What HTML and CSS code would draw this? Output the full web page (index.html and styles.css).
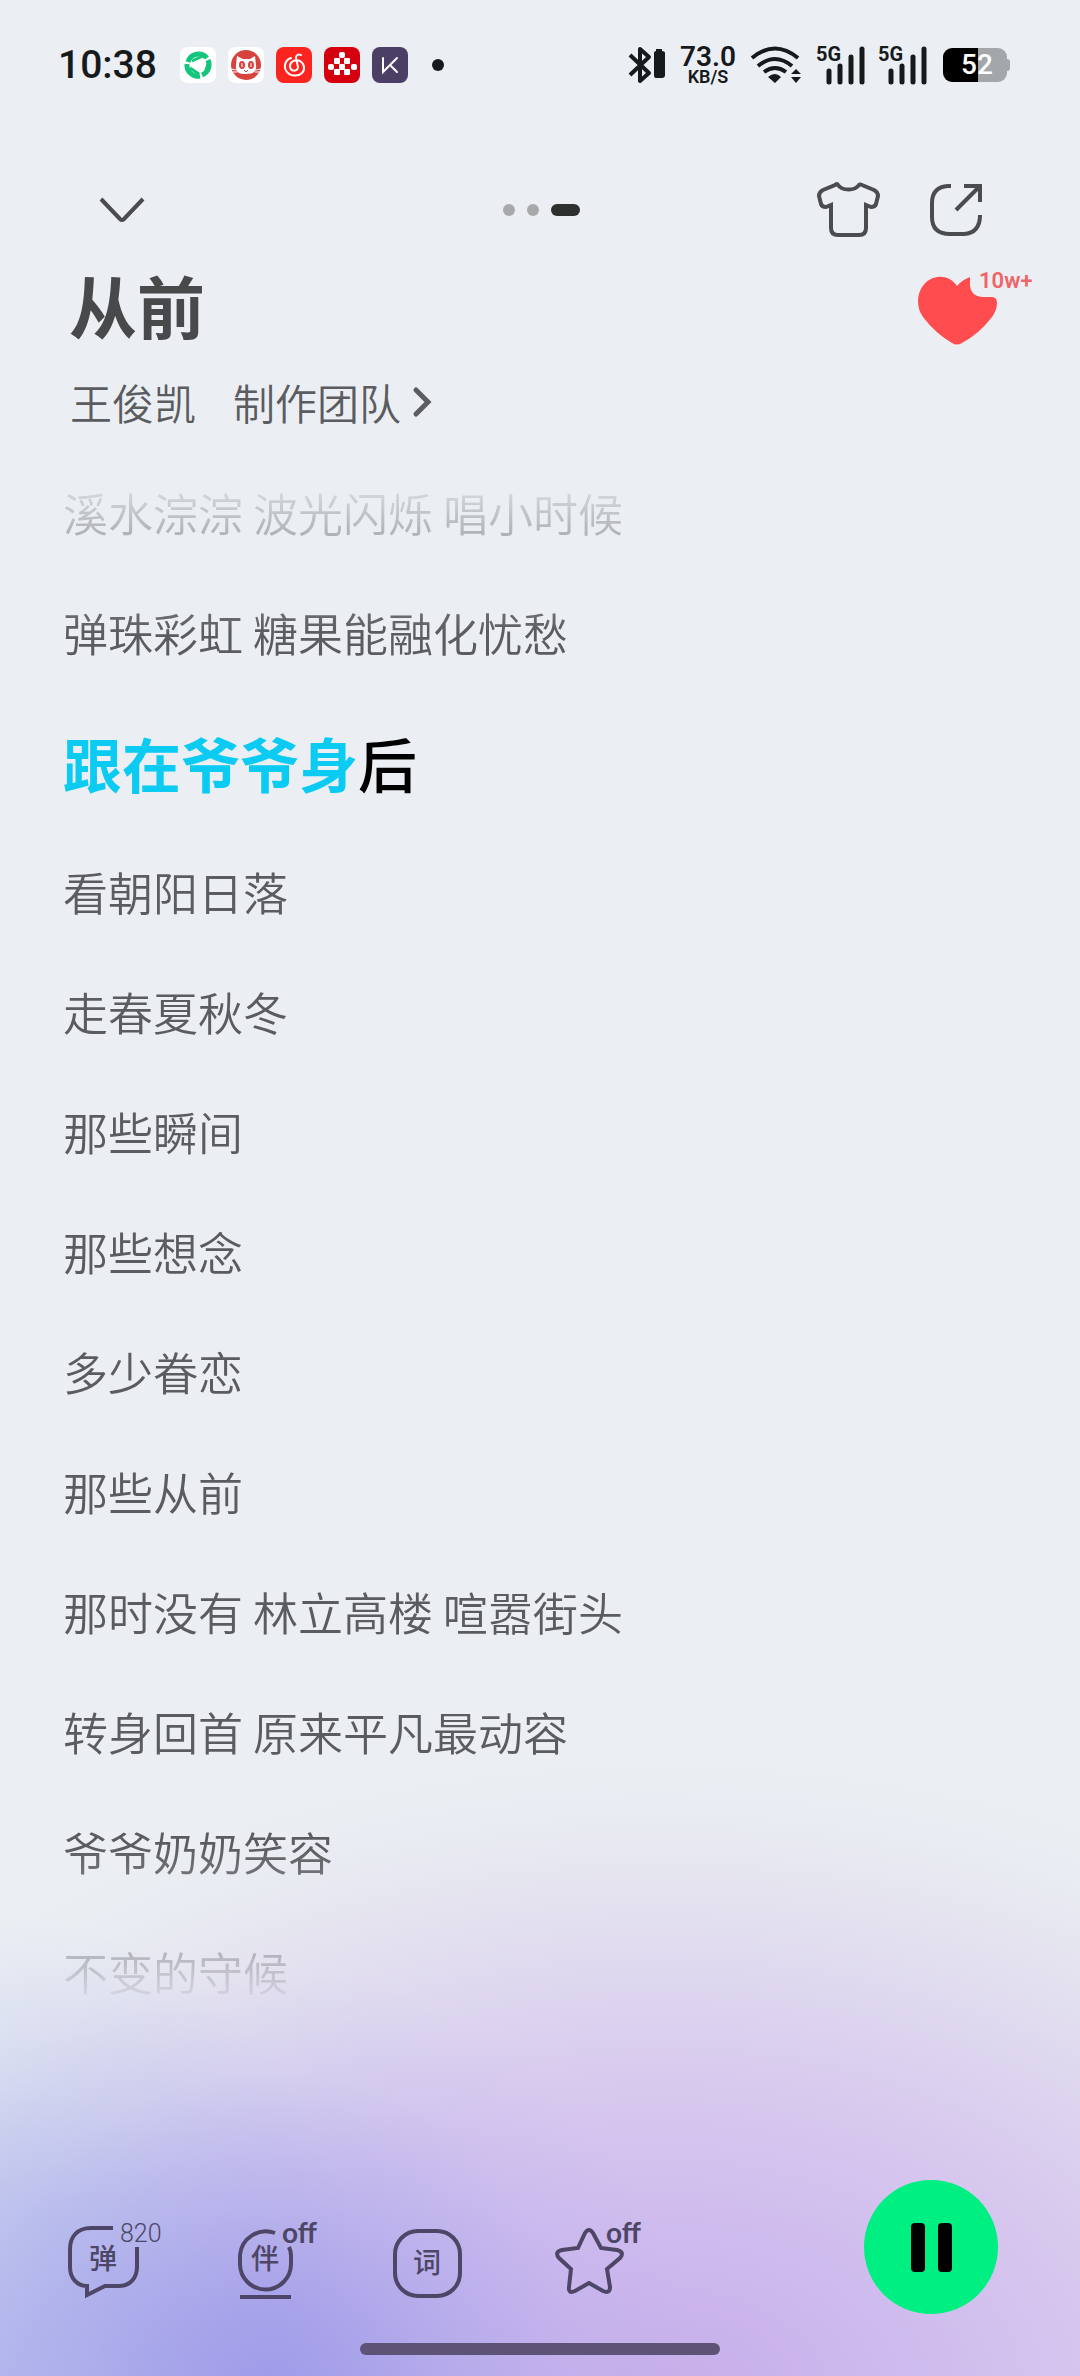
FILE: index.html
```html
<!DOCTYPE html>
<html lang="zh-CN">
<head>
<meta charset="UTF-8">
<meta name="viewport" content="width=device-width, initial-scale=1.0">
<title>从前 - 王俊凯</title>
<link rel="stylesheet" href="styles.css">
</head>

<body>
    <div class="status">
        <span class="time">10:38</span>
        <div class="apps">
            <svg class="app" viewBox="0 0 36 36">
                <rect width="36" height="36" rx="8" fill="#fff"/>
                <g fill="none" stroke="#14c57c" stroke-width="5">
                    <path d="M8 15A11 11 0 0 1 27 11"/>
                    <path d="M28 13A11 11 0 0 1 22 28"/>
                    <path d="M20 29A11 11 0 0 1 7 17"/>
                </g>
                <path d="M12 14L23 9M28 17L25 26M10 21L19 27" stroke="#14c57c" stroke-width="3"/>
            </svg>
            <svg class="app" viewBox="0 0 36 36">
                <rect width="36" height="36" rx="8" fill="#fff"/>
                <circle cx="18" cy="18" r="15" fill="#d8423c"/>
                <path d="M9 9L15 12H22L27 9L28 18C29 26 24 27 18 27S7 26 8 18Z" fill="#fff"/>
                <ellipse cx="14" cy="18" rx="3" ry="4" fill="#d8423c"/>
                <ellipse cx="23" cy="18" rx="3" ry="4" fill="#d8423c"/>
                <path d="M14 16V20M23 16V20" stroke="#fff"/>
                <path d="M16 23L18 25L20 23" fill="none" stroke="#d8423c"/>
                <path d="M3 22L8 23M4 25L9 25M33 22L28 23M32 25L27 25" stroke="#fff"/>
            </svg>
            <svg class="app" viewBox="0 0 36 36">
                <rect width="36" height="36" rx="8" fill="#fb241f"/>
                <path d="M25 8C22 7 20 8 20 11L22 20C22 25 14 25 14 19C14 14 20 12 24 14C29 17 29 23 26 26C22 30 14 29 11 25C7 20 9 13 15 11" fill="none" stroke="#fff" stroke-width="2" stroke-linecap="round"/>
            </svg>
            <svg class="app" viewBox="0 0 36 36">
                <rect width="36" height="36" rx="8" fill="#d5000f"/>
                <g fill="#fff">
                    <rect x="15" y="5" width="6" height="6" rx="2"/>
                    <rect x="10" y="11" width="6" height="6" rx="1"/><rect x="20" y="11" width="6" height="6" rx="1"/>
                    <rect x="4" y="17" width="6" height="6" rx="2"/><rect x="15" y="17" width="6" height="6" rx="1"/><rect x="27" y="17" width="6" height="6" rx="2"/>
                    <rect x="10" y="22" width="6" height="6" rx="1"/><rect x="20" y="22" width="6" height="6" rx="1"/>
                </g>
            </svg>
            <svg class="app" viewBox="0 0 36 36">
                <rect width="36" height="36" rx="8" fill="#4c3f66"/>
                <path d="M11 11V25L25 11M18 18L25 25" fill="none" stroke="#fff" stroke-width="2" stroke-linecap="round"/>
            </svg>
        </div>
        <span class="more"></span>

        <div class="system">
            <svg class="bluetooth" viewBox="0 0 38 38">
                <path d="M2 9L21 27L12 35V3L21 11L2 29" fill="none" stroke="#171a1b" stroke-width="4" stroke-linejoin="round"/>
                <path d="M26 7Q26 5 28 5V3H34V5Q37 5 37 7V29Q37 32 34 32H28Q26 32 26 29Z" fill="#171a1b"/>
            </svg>
            <div class="speed"><b>73.0</b><small>KB/S</small></div>
            <svg class="wifi" viewBox="0 0 52 38">
                <g fill="none" stroke="#171a1b" stroke-width="4">
                    <path d="M2 12Q25 -7 48 12"/>
                    <path d="M8 20Q25 6 42 20"/>
                    <path d="M14 26Q25 18 36 26"/>
                </g>
                <path d="M18 31Q25 25 31 31L25 37Z M41 28L46 23L51 28Z M41 31H51L46 37Z" fill="#171a1b"/>
            </svg>
            <div class="signal">
                <span>5G</span>
                <svg viewBox="0 0 48 38"><path d="M13 25V36M24 20V36M35 11V36M46 3V36" stroke="#171a1b" stroke-width="5" stroke-linecap="round"/></svg>
            </div>
            <div class="signal">
                <span>5G</span>
                <svg viewBox="0 0 48 38"><path d="M13 25V36M24 20V36M35 11V36M46 3V36" stroke="#171a1b" stroke-width="5" stroke-linecap="round"/></svg>
            </div>
            <div class="battery"><span class="level">5</span><span>2</span></div>
        </div>
    </div>

    <div class="topbar">
        <button class="icon-btn" aria-label="收起">
            <svg class="chevron" viewBox="0 0 46 26"><path d="M2 2L21 22Q23 24 25 22L44 2"/></svg>
        </button>
        <div class="pages"><i></i><i></i><i class="on"></i></div>
        <div class="actions">
            <button class="icon-btn" aria-label="皮肤">
                <svg class="shirt" viewBox="0 0 62 56"><path d="M21 3C25 9 38 9 42 3Q43 2 45 3L57 8Q61 10 61 14L59 22Q58 25 54 25L49 23V46Q49 53 42 53H21Q14 53 14 46V23L9 25Q5 25 4 22L2 14Q2 10 6 8L18 3Q20 1 21 3Z"/></svg>
            </button>
            <button class="icon-btn" aria-label="分享">
                <svg class="share" viewBox="0 0 54 54"><path d="M21 3H18Q2 4 2 20V34Q2 51 20 51H34Q50 50 50 32M34 3H50V19M26 27L50 3"/></svg>
            </button>
        </div>
    </div>

    <div class="song">
        <h1>从前</h1>
        <button class="like" aria-label="喜欢">
            <svg viewBox="0 0 80 70"><path d="M40 10Q45 4 53 1V10Q54 20 65 21H75Q80 21 80 27Q80 34 75 41Q62 58 45 67Q40 70 35 67Q18 57 6 41Q1 34 1 25C2 0 29 -7 40 10Z" fill="#ff4d4f"/></svg>
            <span class="like-count">10w+</span>
        </button>
    </div>
    <div class="credits">
        <a href="#">王俊凯</a>
        <a href="#">制作团队
            <svg viewBox="0 0 18 30"><path d="M3 3L15 15L3 27"/></svg>
        </a>
    </div>

    <ul class="lyrics">
        <li>溪水淙淙 波光闪烁 唱小时候</li>
        <li>弹珠彩虹 糖果能融化忧愁</li>
        <li class="current"><span class="sung">跟在爷爷身</span>后</li>
        <li>看朝阳日落</li>
        <li>走春夏秋冬</li>
        <li>那些瞬间</li>
        <li>那些想念</li>
        <li>多少眷恋</li>
        <li>那些从前</li>
        <li>那时没有 林立高楼 喧嚣街头</li>
        <li>转身回首 原来平凡最动容</li>
        <li>爷爷奶奶笑容</li>
        <li>不变的守候</li>
    </ul>

    <div class="player">
        <div class="tools">
            <button class="tool">
                <svg viewBox="0 0 72 72"><path d="M46 2H24C10 2 3 11 3 23V41C3 52 10 60 20 60V69L38 60H52C63 60 70 52 70 41V21"/></svg>
                <span class="glyph raised">弹</span>
                <span class="badge count">820</span>
            </button>
            <button class="tool">
                <svg viewBox="0 0 72 72"><path d="M46 7A26 26 0 0 0 11 29V38A25 25 0 0 0 62 38V30Q62 25 60 21M11 71H62"/></svg>
                <span class="glyph raised">伴</span>
                <span class="badge">off</span>
            </button>
            <button class="tool">
                <svg viewBox="0 0 72 72"><rect x="4" y="5" width="65" height="65" rx="23"/></svg>
                <span class="glyph">词</span>
            </button>
            <button class="tool" aria-label="收藏">
                <svg viewBox="0 0 72 72"><path d="M32 7Q36 1 40 7L48 22L64 24Q72 26 67 32L54 43L57 61Q57 68 50 65L36 57L22 65Q15 68 16 61L18 43L6 32Q1 26 9 24L25 22Z"/></svg>
                <span class="badge">off</span>
            </button>
        </div>
        <button class="pause" aria-label="暂停"><i></i><i></i></button>
    </div>
    <div class="home"></div>
</body>
</html>
```
FILE: styles.css
```css
* {
    box-sizing: border-box;
}
body {
    margin: 0;
    min-height: 100vh;
    display: flex;
    flex-direction: column;
    font-family: "Noto Sans CJK SC", sans-serif;
    color: #5b5c5f;
    background-color: #ebeff3;
    background-image:
        radial-gradient(ellipse 420px 430px at 25% 101%, rgba(156, 152, 232, 0.95), rgba(158, 155, 233, 0.8) 20%, rgba(160, 158, 234, 0.45) 48%, rgba(165, 165, 236, 0.13) 76%, rgba(170, 175, 240, 0) 100%),
        radial-gradient(ellipse 380px 460px at 0 100%, rgba(160, 175, 236, 0.65), rgba(160, 175, 236, 0.5) 36%, rgba(165, 180, 238, 0.25) 64%, rgba(170, 185, 240, 0) 100%),
        radial-gradient(ellipse 970px 640px at 61% 101%, #c6adea, #d0bdee 30%, #d7c8ee 48%, #dcd3ef 61%, #e3e1ef 77%, #e9ecf2 92%, #ebeff3 100%);
    background-repeat: no-repeat;
}
button {
    padding: 0;
    border: none;
    background: none;
    color: inherit;
    font-family: inherit;
    cursor: pointer;
}
svg {
    display: block;
    overflow: visible;
}
a {
    color: inherit;
    text-decoration: none;
}

/* status bar */
.status {
    display: flex;
    align-items: center;
    height: 130px;
    padding: 0 73px 0 58px;
    font-family: Roboto, sans-serif;
    color: #171a1b;
}
.time {
    width: 122px;
    font-size: 39px;
    font-weight: 500;
}
.apps {
    display: flex;
    gap: 12px;
}
.app {
    width: 36px;
    height: 36px;
}
.more {
    width: 12px;
    height: 12px;
    margin-left: 24px;
    border-radius: 50%;
    background-color: #171a1b;
}
.system {
    display: flex;
    align-items: center;
    gap: 14px;
    margin-left: auto;
}
.bluetooth {
    width: 38px;
    height: 38px;
}
.speed {
    display: flex;
    flex-direction: column;
    align-items: center;
    width: 56px;
}
.speed b {
    font-size: 28px;
    line-height: 24px;
    font-weight: 600;
}
.speed small {
    font-size: 18px;
    line-height: 16px;
    font-weight: 600;
}
.wifi {
    width: 52px;
    height: 38px;
}
.signal {
    position: relative;
}
.signal svg {
    width: 48px;
    height: 38px;
}
.signal span {
    position: absolute;
    left: 0;
    top: 0;
    font-size: 20px;
    line-height: 16px;
    font-weight: 700;
}
.battery {
    position: relative;
    display: flex;
    width: 64px;
    height: 34px;
    margin-left: 3px;
    border-radius: 9px;
    background: linear-gradient(to right, #000 55%, #a3a7a9 55%);
    color: #fff;
    font-size: 28px;
    line-height: 34px;
    font-weight: 500;
}
.battery::after {
    content: "";
    position: absolute;
    right: -3px;
    top: 11px;
    width: 3px;
    height: 12px;
    border-radius: 0 3px 3px 0;
    background-color: #a3a7a9;
}
.level {
    width: 34px;
    text-align: right;
}

/* top bar */
.topbar {
    display: grid;
    grid-template-columns: 1fr auto 1fr;
    align-items: center;
    height: 120px;
    margin-top: 20px;
    padding: 0 96px 0 99px;
}
.icon-btn {
    justify-self: start;
}
.icon-btn svg {
    fill: none;
    stroke: #4a4c4e;
    stroke-width: 4px;
}
.chevron {
    width: 46px;
    height: 26px;
}
.pages {
    display: flex;
    gap: 12px;
}
.pages i {
    width: 12px;
    height: 12px;
    border-radius: 6px;
    background-color: #a7a9ab;
}
.pages .on {
    width: 29px;
    background-color: #2d302f;
}
.actions {
    display: flex;
    justify-content: flex-end;
    align-items: center;
    gap: 51px;
}
.shirt {
    width: 62px;
    height: 56px;
}
.share {
    width: 54px;
    height: 54px;
}

/* song title */
.song {
    display: flex;
    align-items: flex-end;
    justify-content: space-between;
    padding: 0 83px 0 69px;
}
h1 {
    margin: 0;
    padding-bottom: 6px;
    font-size: 68px;
    line-height: 70px;
    font-weight: 700;
    color: #48494b;
}
.like {
    position: relative;
}
.like svg {
    width: 80px;
    height: 70px;
}
.like-count {
    position: absolute;
    left: 62px;
    top: -6px;
    font: 600 22px/22px Roboto, sans-serif;
    color: #ee6467;
}
.credits {
    display: flex;
    gap: 37px;
    margin-top: 26px;
    padding: 0 70px;
    font-size: 42px;
    line-height: 60px;
    font-weight: 350;
}
.credits a {
    display: flex;
    align-items: center;
    gap: 12px;
}
.credits svg {
    width: 18px;
    height: 30px;
    fill: none;
    stroke: #5b5c5f;
    stroke-width: 5px;
    stroke-linecap: round;
}

/* lyrics fade out at both ends */
.lyrics {
    list-style: none;
    margin: 21px 0 0;
    padding: 0 63px;
    font-size: 45px;
    font-weight: 350;
    -webkit-mask-image: linear-gradient(to bottom, transparent 13px, #000 179px, #000 calc(100% - 185px), transparent calc(100% - 19px));
    mask-image: linear-gradient(to bottom, transparent 13px, #000 179px, #000 calc(100% - 185px), transparent calc(100% - 19px));
}
.lyrics li {
    line-height: 120px;
}
.lyrics .current {
    font-size: 59px;
    line-height: 139px;
    font-weight: 500;
    color: #000;
}
.sung {
    font-weight: 700;
    color: #0bcbf3;
}

/* player controls */
.player {
    display: flex;
    align-items: flex-end;
    justify-content: space-between;
    margin-top: auto;
    padding: 0 82px 0 67px;
    color: #4d4666;
}
.tools {
    display: flex;
    gap: 90px;
    padding-bottom: 16px;
}
.tool {
    position: relative;
    display: grid;
    place-items: center;
    width: 72px;
    height: 72px;
}
.tool svg, .glyph {
    grid-area: 1 / 1;
}
.tool svg {
    width: 72px;
    height: 72px;
    fill: none;
    stroke: #4d4666;
    stroke-width: 4px;
}
.glyph {
    padding-bottom: 2px;
    font-size: 28px;
    line-height: 30px;
    font-weight: 500;
}
.raised {
    padding-bottom: 10px;
}
.badge {
    position: absolute;
    left: 53px;
    top: -8px;
    font: 700 28px/28px Lato, sans-serif;
}
.count {
    top: -6px;
    font: 300 25px/28px Roboto, sans-serif;
}
.pause {
    display: flex;
    align-items: center;
    justify-content: center;
    gap: 13px;
    width: 134px;
    height: 134px;
    border-radius: 50%;
    background-color: #00ef82;
}
.pause i {
    width: 14px;
    height: 49px;
    border-radius: 4px;
    background-color: #000;
}
.home {
    align-self: center;
    width: 33.3%;
    height: 12px;
    margin: 29px 0 21px;
    border-radius: 6px;
    background-color: #5d5376;
}
```
